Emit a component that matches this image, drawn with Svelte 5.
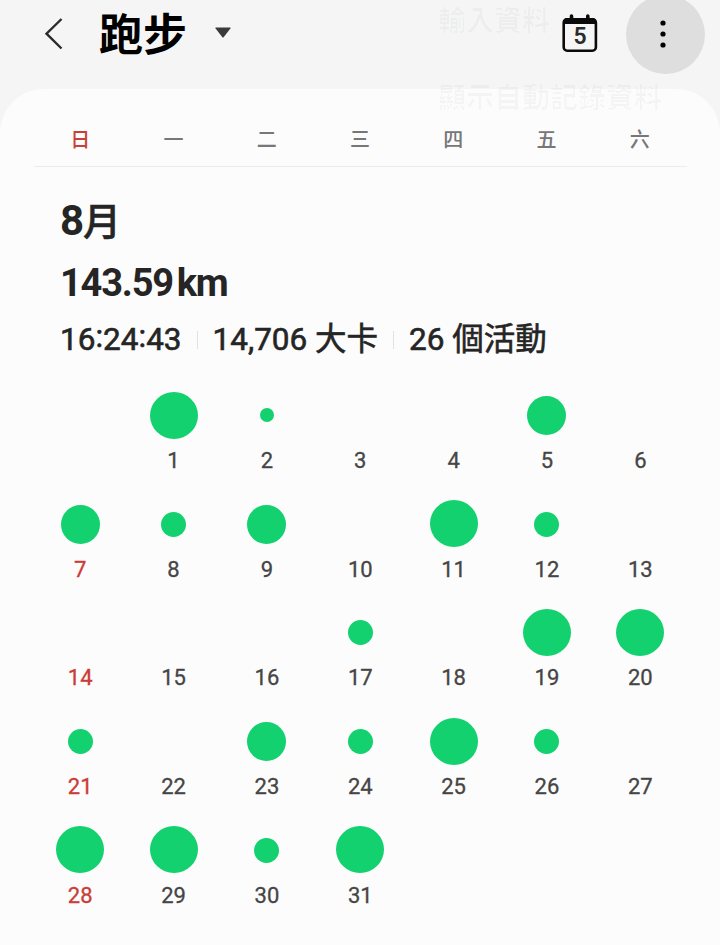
<script lang="ts">
  type Size = 'tiny' | 'small' | 'medium' | 'large'

  const weekdays = ['日', '一', '二', '三', '四', '五', '六']
  const menuItems = ['輸入資料', '顯示自動記錄資料']
  const duration = ['16', '24', '43']
  const stats = ['14,706 大卡', '26 個活動']

  // August starts on a Monday
  const offset = 1
  const daysInMonth = 31

  const activities: Record<number, Size> = {
    1: 'large', 2: 'tiny', 5: 'medium',
    7: 'medium', 8: 'small', 9: 'medium', 11: 'large', 12: 'small',
    17: 'small', 19: 'large', 20: 'large',
    21: 'small', 23: 'medium', 24: 'small', 25: 'large', 26: 'small',
    28: 'large', 29: 'large', 30: 'small', 31: 'large'
  }

  const cells = Array.from({ length: offset + daysInMonth }, (_, i) => i - offset + 1)
</script>

<div class="screen">
  <header>
    <button type="button" class="back" aria-label="Back">
      <svg width="20" height="34" viewBox="0 0 20 34">
        <path d="M17.5 2L2.5 16.7L17.5 31.5" fill="none" stroke="#2b2b2b" stroke-width="2.4" />
      </svg>
    </button>
    <h1>跑步</h1>
    <svg class="caret" width="16" height="11" viewBox="0 0 16 11">
      <path d="M1 .5H15Q16 .5 15.4 1.4L8.8 10Q8 11 7.2 10L.6 1.4Q0 .5 1 .5Z" fill="#3a3a3a" />
    </svg>
    <button type="button" class="today" aria-label="Today">
      <svg width="36" height="39" viewBox="0 0 36 39">
        <rect x="1.7" y="5.2" width="32.2" height="31.5" rx="3.5" fill="none" stroke="#0a0a0a" stroke-width="2.6" />
        <path d="M1.5 10V7.5Q1.5 4 5 4H30.5Q34 4 34 7.5V10Z" fill="#0a0a0a" />
        <path d="M9.5 2V6M25.8 2V6" stroke="#0a0a0a" stroke-width="3.6" stroke-linecap="round" />
      </svg>
      <span>5</span>
    </button>
    <button type="button" class="more" aria-label="More options">
      <svg width="6" height="30" viewBox="0 0 6 30">
        <circle cx="3" cy="4" r="2.6" />
        <circle cx="3" cy="15" r="2.6" />
        <circle cx="3" cy="26" r="2.6" />
      </svg>
    </button>
  </header>

  <main>
    <div class="weekdays">
      {#each weekdays as day, i}
        <span class:sunday={i === 0}>{day}</span>
      {/each}
    </div>

    <section class="summary">
      <h2>8<span>月</span></h2>
      <p class="distance"><span class="value">143.59</span><span class="unit">km</span></p>
      <ul>
        <li><span>{#each duration as part, i}{#if i > 0}<span class="colon">:</span>{/if}{part}{/each}</span></li>
        {#each stats as stat}
          <li>{stat}</li>
        {/each}
      </ul>
    </section>

    <div class="calendar">
      {#each cells as day, i}
        <div class="day" class:sunday={i % 7 === 0}>
          {#if day > 0}
            <div class="slot">
              {#if activities[day]}
                <i class={activities[day]}></i>
              {/if}
            </div>
            <span>{day}</span>
          {/if}
        </div>
      {/each}
    </div>
  </main>

  <!-- options menu, almost faded out -->
  <div class="menu">
    {#each menuItems as item}
      <span>{item}</span>
    {/each}
  </div>
</div>

<style>
  :global(body) {
    margin: 0;
    background: #f5f5f5;
  }

  .screen {
    position: relative;
    width: 720px;
    height: 945px;
    overflow: hidden;
    background: #f5f5f5;
    color: #252525;
    font-family: Roboto, 'Noto Sans CJK TC', sans-serif;
  }

  h1, h2, p, ul {
    margin: 0;
    padding: 0;
  }

  button {
    padding: 0;
    border: none;
    background: none;
    font: inherit;
  }

  header {
    display: flex;
    align-items: center;
    box-sizing: border-box;
    height: 89px;
    padding: 0 15px 21px 44px;
  }

  .back {
    width: 20px;
    height: 34px;
  }

  .back svg, .today svg, .more svg {
    display: block;
  }

  h1 {
    margin-left: 35px;
    padding-top: 4px;
    color: #000;
    font-size: 44px;
    font-weight: 700;
    line-height: 68px;
  }

  .caret {
    margin: 0 auto 3px 28px;
  }

  .today {
    position: relative;
    width: 36px;
    height: 39px;
    margin: 0 28px 2px 0;
  }

  .today span {
    position: absolute;
    top: 9px;
    left: 0;
    width: 36px;
    color: #2b2b2b;
    font-size: 23px;
    font-weight: 600;
    line-height: 27px;
    text-align: center;
  }

  .more {
    display: flex;
    align-items: center;
    justify-content: center;
    box-sizing: border-box;
    width: 79px;
    height: 79px;
    margin: -5px 0 -6px;
    padding: 0 6px 1px 0;
    border-radius: 50%;
    background: #dedede;
  }

  main {
    height: 856px;
    border-radius: 44px 44px 0 0;
    background: #fcfcfc;
  }

  .weekdays {
    display: grid;
    grid-template-columns: repeat(7, 1fr);
    box-sizing: border-box;
    height: 78px;
    margin: 0 33.5px;
    padding-top: 37px;
    border-bottom: 1px solid #ececec;
    color: #777;
    font-size: 20px;
    font-weight: 500;
    line-height: 29px;
    text-align: center;
  }

  .weekdays .sunday {
    color: #c9403a;
  }

  .summary {
    height: 213px;
    padding: 23px 0 0 60px;
    box-sizing: border-box;
  }

  h2 {
    height: 62px;
    font-size: 42px;
    font-weight: 700;
    line-height: 62px;
    letter-spacing: -1px;
  }

  h2 span {
    font-size: 38px;
    font-weight: 500;
    -webkit-text-stroke: 0.5px;
  }

  .distance {
    height: 62px;
    font-size: 38px;
    font-weight: 700;
    line-height: 62px;
    letter-spacing: -1.2px;
  }

  .unit {
    margin-left: 4px;
    letter-spacing: -1.5px;
  }

  ul {
    display: flex;
    height: 52px;
    list-style: none;
    font-size: 31.5px;
    font-weight: 400;
    line-height: 51px;
    -webkit-text-stroke: 0.6px;
  }

  li {
    display: flex;
    align-items: center;
    height: 51px;
    white-space: pre;
  }

  li + li::before {
    content: '';
    width: 1px;
    height: 18px;
    margin: 0 15px;
    background: #e2e2e2;
  }

  .colon {
    line-height: 1;
    vertical-align: 3px;
  }

  .calendar {
    display: grid;
    grid-template-columns: repeat(7, 1fr);
    grid-auto-rows: 108.7px;
    margin: 0 33px 0 33.5px;
  }

  .day {
    display: flex;
    flex-direction: column;
    align-items: center;
    color: #454545;
    font-size: 22px;
    line-height: 26px;
    -webkit-text-stroke: 0.3px;
  }

  .day.sunday {
    color: #cb3b37;
  }

  .slot {
    display: flex;
    align-items: center;
    justify-content: center;
    height: 71px;
    margin-bottom: -3px;
  }

  .slot i {
    border-radius: 50%;
    background: #13d16f;
  }

  .tiny {
    width: 14px;
    height: 14px;
    margin-bottom: 2px;
  }

  .small {
    width: 25px;
    height: 25px;
  }

  .medium {
    width: 39px;
    height: 39px;
  }

  .large {
    width: 48px;
    height: 47px;
    margin-bottom: 1px;
  }

  .menu {
    position: absolute;
    top: 1px;
    left: 438px;
    display: flex;
    flex-direction: column;
    gap: 35px;
    color: rgba(0, 0, 0, 0.028);
    font-size: 28px;
    font-weight: 700;
    line-height: 42px;
    pointer-events: none;
  }
</style>
